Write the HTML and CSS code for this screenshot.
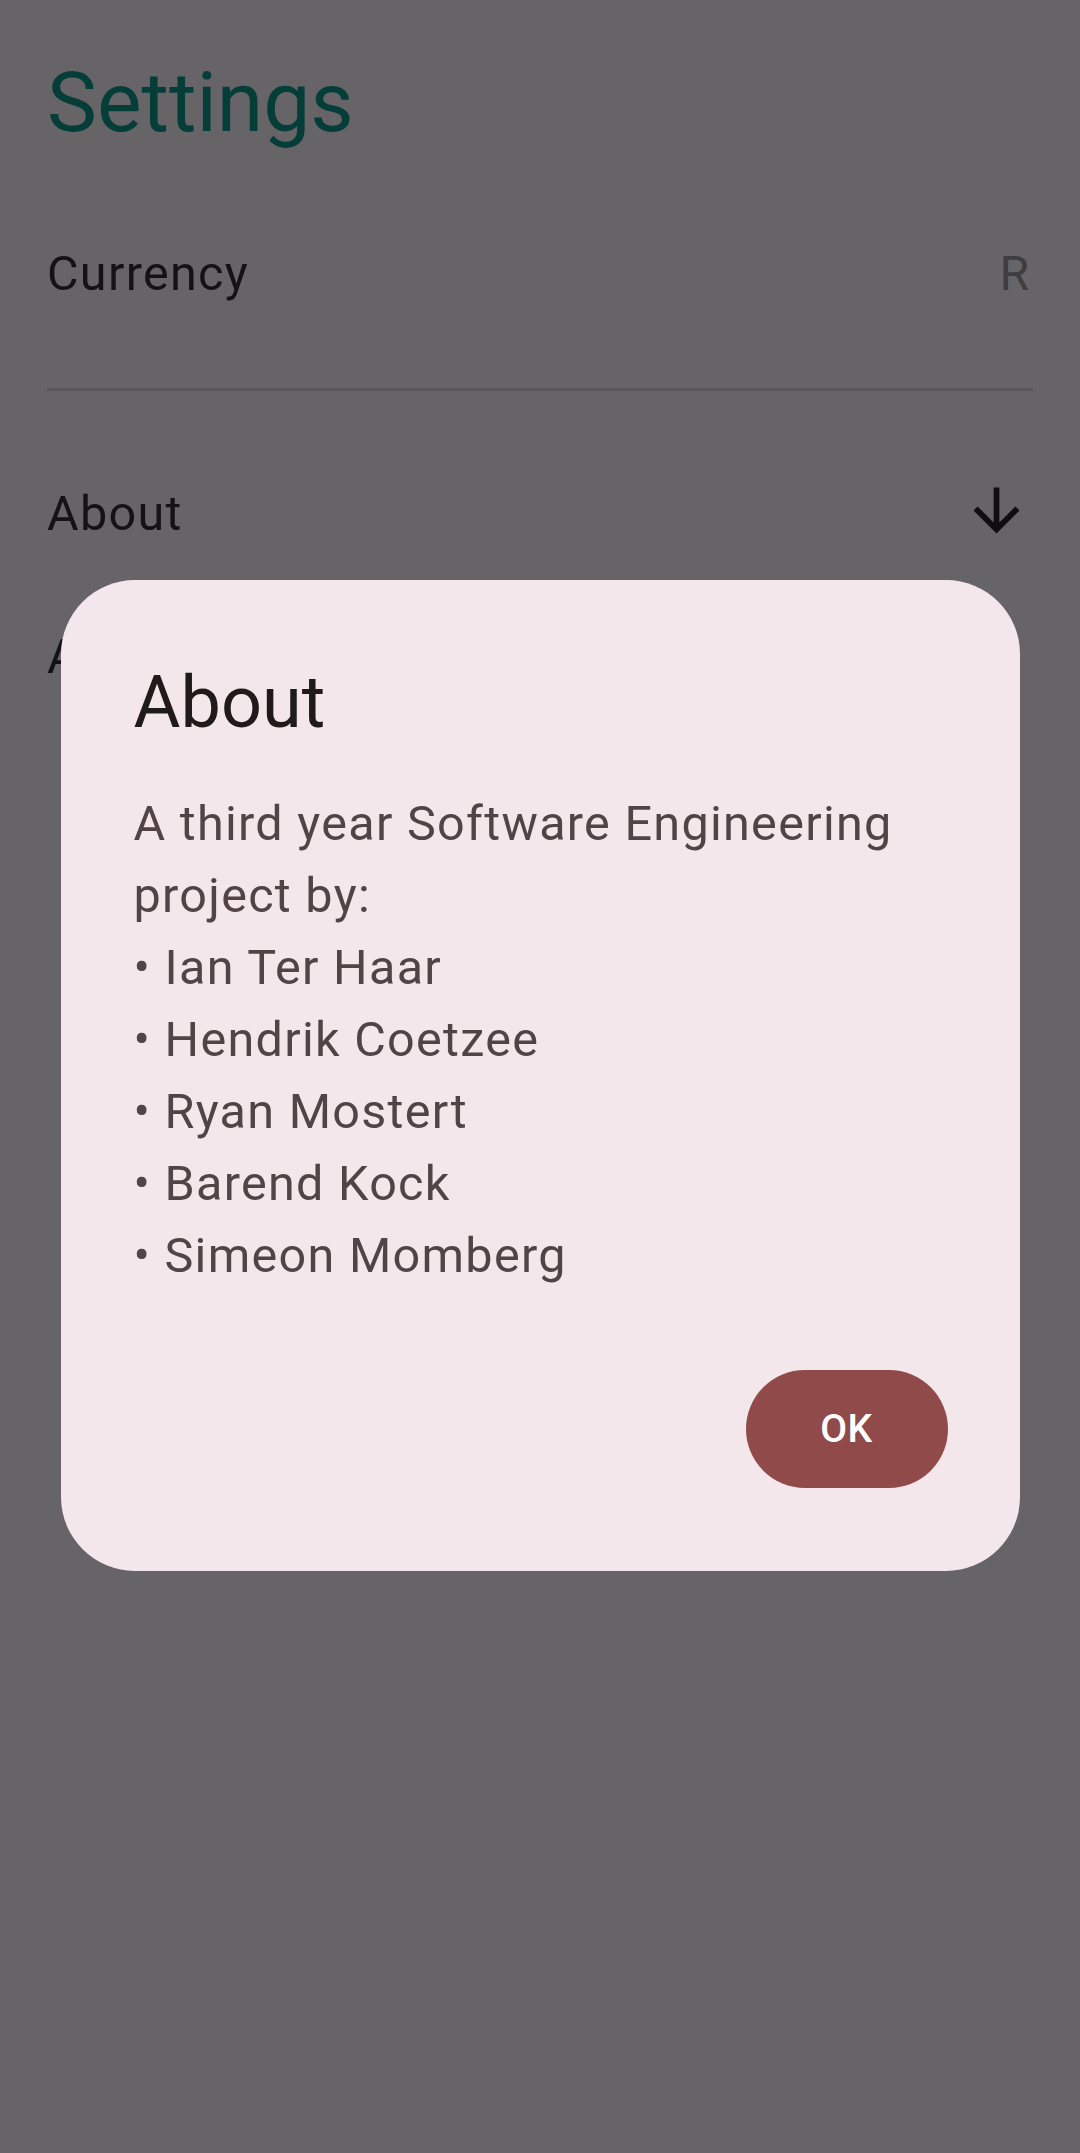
FILE: index.html
```html
<!DOCTYPE html>
<html lang="en">
<head>
<meta charset="utf-8">
<title>Settings</title>
<link rel="stylesheet" href="styles.css">
</head>
<body>
<main class="page">
  <h1 class="title">Settings</h1>
  <div class="row row-currency">
    <span class="label">Currency</span>
    <span class="value">R</span>
  </div>
  <hr class="divider">
  <div class="row row-about">
    <span class="label">About</span>
    <svg class="arrow" viewBox="0 0 24 24" aria-hidden="true"><path d="M20 12l-1.41-1.41L13 16.17V4h-2v12.17l-5.58-5.59L4 12l8 8 8-8z"/></svg>
  </div>
  <div class="row row-third">
    <span class="label">App version</span>
  </div>
</main>
<div class="scrim">
  <div class="dialog" role="dialog">
    <h2 class="dialog-title">About</h2>
    <div class="dialog-body">
      <p class="line">A third year Software Engineering</p>
      <p class="line">project by:</p>
      <p class="line">• Ian Ter Haar</p>
      <p class="line">• Hendrik Coetzee</p>
      <p class="line">• Ryan Mostert</p>
      <p class="line">• Barend Kock</p>
      <p class="line">• Simeon Momberg</p>
    </div>
    <div class="dialog-actions">
      <button class="btn-ok">OK</button>
    </div>
  </div>
</div>
</body>
</html>
```

FILE: styles.css
```css
* { box-sizing: border-box; }
html, body {
  margin: 0;
  padding: 0;
  background: #676468;
  font-family: Roboto, "Noto Sans", sans-serif;
}
body { width: 1080px; height: 2153px; overflow: hidden; }

.page {
  padding: 0 47px;
}
.title {
  margin: 54px 0 0 0;
  font-size: 84px;
  line-height: 98px;
  font-weight: 400;
  color: #053d39;
}
.row {
  display: flex;
  align-items: center;
  justify-content: space-between;
}
.label {
  font-size: 48.5px;
  line-height: 55px;
  color: #141214;
  letter-spacing: 1.3px;
}
.row-currency { margin-top: 94px; }
.value {
  font-size: 48px;
  line-height: 55px;
  color: #3f3d41;
  margin-right: 4px;
}
.divider {
  margin: 87px 0 0 0;
  border: 0;
  height: 3px;
  background: #5a585c;
}
.row-about { margin-top: 95px; height: 55px; }
.arrow {
  width: 69px;
  height: 69px;
  fill: #0f0d0f;
  margin-right: 2px;
  margin-top: -7px;
}
.row-third { margin-top: 88px; }

.scrim {
  position: fixed;
  inset: 0;
  display: flex;
  align-items: center;
  justify-content: center;
}
.dialog {
  width: 959px;
  background: #f3e7eb;
  border-radius: 74px;
  padding: 80px 72px 83px 73px;
  margin-top: -2px;
}
.dialog-title {
  margin: 0;
  font-size: 72px;
  line-height: 86px;
  font-weight: 400;
  color: #201a1b;
}
.dialog-body {
  margin-top: 42px;
}
.line {
  margin: 0;
  font-size: 48.5px;
  line-height: 72px;
  color: #524346;
  letter-spacing: 1.3px;
}
.dialog-actions {
  margin-top: 78px;
  display: flex;
  justify-content: flex-end;
}
.btn-ok {
  width: 202px;
  height: 118px;
  border: 0;
  border-radius: 59px;
  background: #904a4a;
  color: #ffffff;
  font-family: Roboto, "Noto Sans", sans-serif;
  font-size: 39px;
  font-weight: 500;
  letter-spacing: 0.5px;
  padding: 0;
}
```
